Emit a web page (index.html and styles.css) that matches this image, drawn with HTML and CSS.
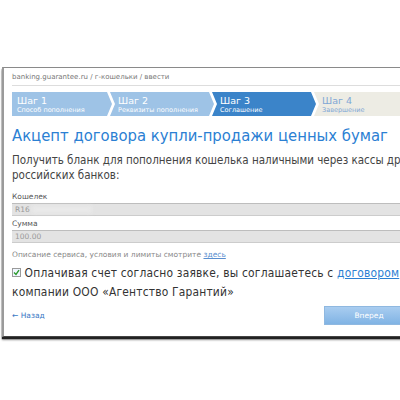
FILE: index.html
```html
<!DOCTYPE html>
<html lang="ru">
<head>
<meta charset="utf-8">
<link rel="stylesheet" href="styles.css">
</head>
<body>
<div class="card">
  <div class="crumbs">banking.guarantee.ru / г-кошельки / ввести</div>
  <div class="steps">
    <div class="step done first"><span class="st">Шаг 1</span><span class="ss">Способ пополнения</span></div>
    <div class="step done"><span class="st">Шаг 2</span><span class="ss">Реквизиты пополнения</span></div>
    <div class="step active"><span class="st">Шаг 3</span><span class="ss">Соглашение</span></div>
    <div class="step todo"><span class="st">Шаг 4</span><span class="ss">Завершение</span></div>
  </div>
  <h1 class="title">Акцепт договора купли-продажи ценных бумаг</h1>
  <p class="lead">Получить бланк для пополнения кошелька наличными через кассы других российских банков:</p>
  <div class="field">
    <div class="label">Кошелек</div>
    <div class="input"><span>R16</span><span class="blur"></span></div>
  </div>
  <div class="field">
    <div class="label">Сумма</div>
    <div class="input"><span>100.00</span></div>
  </div>
  <div class="note">Описание сервиса, условия и лимиты смотрите <a href="#">здесь</a></div>
  <p class="agree"><span class="check"><svg width="7" height="7" viewBox="0 0 7 7"><path d="M1 3.5 L3 5.5 L6 1.2" fill="none" stroke="#2a9a2a" stroke-width="1.4"/></svg></span> Оплачивая счет согласно заявке, вы соглашаетесь с <a href="#">договором</a> компании ООО «Агентство Гарантий»</p>
  <div class="nav">
    <a href="#" class="back">← Назад</a>
    <span class="next">Вперед</span>
  </div>
</div>
</body>
</html>
```
FILE: styles.css
```css
html, body { margin: 0; padding: 0; background: #fff; overflow: hidden; width: 400px; height: 400px; }
body { font-family: "DejaVu Sans", Verdana, sans-serif; }
.card {
  margin: 67px 0 0 2px;
  width: 520px;
  height: 270px;
  box-sizing: border-box;
  border-top: 1px solid #8a8a8a;
  border-left: 2px solid #9a9a9a;
  border-bottom: 1px solid #444;
  box-shadow: 0 2px 1px #222, 0 3px 2px #999;
  padding: 3px 0 0 8px;
  background: #fff;
}
.crumbs { font-size: 7px; color: #777; height: 14px; line-height: 12px; border-bottom: 1px solid #ddd; width: 440px; }
.steps { display: flex; margin-top: 6px; height: 24px; }
.step {
  width: 104px; height: 24px; margin-right: -2px;
  box-sizing: border-box; padding: 3px 0 0 8px;
  display: flex; flex-direction: column;
  clip-path: polygon(0 0, calc(100% - 5px) 0, 100% 50%, calc(100% - 5px) 100%, 0 100%, 5px 50%);
}
.step.first { clip-path: polygon(0 0, calc(100% - 5px) 0, 100% 50%, calc(100% - 5px) 100%, 0 100%); padding-left: 5px; width: 100px; }
.step.done { background: #9ec3e6; color: #fff; }
.step.active { background: #3b84c9; color: #fff; }
.step.todo { background: #edece4; color: #7fa7d5; width: 140px; }
.st { font-size: 9.5px; line-height: 11px; }
.ss { font-size: 6.5px; line-height: 8px; }
.title { margin: 9px 0 0; font-family: "DejaVu Sans Condensed", "DejaVu Sans", sans-serif; font-stretch: condensed; font-size: 16.5px; font-weight: normal; color: #2b80d3; line-height: 22px; white-space: nowrap; }
.lead { margin: 6px 0 0; font-family: "DejaVu Sans Condensed", "DejaVu Sans", sans-serif; font-stretch: condensed; font-size: 11.5px; color: #444; line-height: 15px; width: 430px; }
.lead + .field { margin-top: 8px; }
.label { font-size: 7.5px; color: #555; line-height: 12px; }
.input { height: 13px; box-sizing: border-box; border-top: 1px solid #bdbdbd; border-bottom: 1px solid #ccc; background: #e3e3e3; font-size: 7.5px; color: #999; padding-left: 3px; line-height: 11px; display: flex; align-items: center; margin-bottom: 2px; }
.blur { width: 60px; height: 7px; background: #eaeaea; margin-left: 2px; filter: blur(2px); }
.note { font-size: 7.5px; color: #888; margin-top: 6px; line-height: 12px; }
.note a { color: #5a8fd0; }
.agree { margin: 3px 0 0; font-family: "DejaVu Sans Condensed", "DejaVu Sans", sans-serif; font-stretch: condensed; font-size: 11.9px; letter-spacing: 0.2px; color: #333; line-height: 19px; width: 430px; }
.agree a { color: #2b80d3; }
.check { display: inline-flex; width: 7px; height: 7px; border: 1px solid #9a9a9a; background: #f0f6ff; vertical-align: 1px; align-items: center; justify-content: center; }
.nav { display: flex; align-items: center; margin-top: 4px; width: 402px; }
.back { font-size: 7.5px; color: #3a78c4; text-decoration: none; }
.next { margin-left: auto; width: 88px; height: 17px; line-height: 17px; text-align: center; font-size: 7.5px; color: #fff; background: linear-gradient(#a9cdf0, #80b3e4); border: 1px solid #8fb8e0; }
```
